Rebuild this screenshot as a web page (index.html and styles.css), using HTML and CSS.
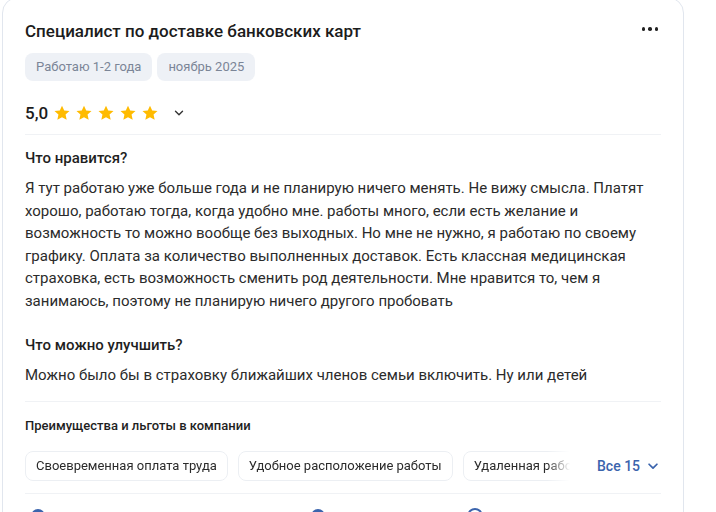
FILE: index.html
```html
<!DOCTYPE html>
<html lang="ru">
<head>
<meta charset="utf-8">
<link rel="stylesheet" href="styles.css">
</head>
<body>
<div class="card">
  <div class="head">
    <h2 class="title">Специалист по доставке банковских карт</h2>
    <span class="more"><i></i><i></i><i></i></span>
  </div>
  <div class="tags">
    <span class="tag">Работаю 1-2 года</span>
    <span class="tag">ноябрь 2025</span>
  </div>
  <div class="rating">
    <span class="score">5,0</span>
    <span class="stars">
      <svg viewBox="0 0 24 24"><path d="M12 2.2l2.95 6.45 7.05.75-5.27 4.75 1.48 6.95L12 17.55 5.79 21.1l1.48-6.95L2 9.4l7.05-.75z"/></svg>
      <svg viewBox="0 0 24 24"><path d="M12 2.2l2.95 6.45 7.05.75-5.27 4.75 1.48 6.95L12 17.55 5.79 21.1l1.48-6.95L2 9.4l7.05-.75z"/></svg>
      <svg viewBox="0 0 24 24"><path d="M12 2.2l2.95 6.45 7.05.75-5.27 4.75 1.48 6.95L12 17.55 5.79 21.1l1.48-6.95L2 9.4l7.05-.75z"/></svg>
      <svg viewBox="0 0 24 24"><path d="M12 2.2l2.95 6.45 7.05.75-5.27 4.75 1.48 6.95L12 17.55 5.79 21.1l1.48-6.95L2 9.4l7.05-.75z"/></svg>
      <svg viewBox="0 0 24 24"><path d="M12 2.2l2.95 6.45 7.05.75-5.27 4.75 1.48 6.95L12 17.55 5.79 21.1l1.48-6.95L2 9.4l7.05-.75z"/></svg>
    </span>
    <svg class="chev" viewBox="0 0 16 16"><path d="M4 6l4 4 4-4" fill="none" stroke="#333" stroke-width="1.6" stroke-linecap="round" stroke-linejoin="round"/></svg>
  </div>
  <hr class="sep">
  <h3 class="sub">Что нравится?</h3>
  <p class="text">Я тут работаю уже больше года и не планирую ничего менять. Не вижу смысла. Платят хорошо, работаю тогда, когда удобно мне. работы много, если есть желание и возможность то можно вообще без выходных. Но мне не нужно, я работаю по своему графику. Оплата за количество выполненных доставок. Есть классная медицинская страховка, есть возможность сменить род деятельности. Мне нравится то, чем я занимаюсь, поэтому не планирую ничего другого пробовать</p>
  <h3 class="sub sub2">Что можно улучшить?</h3>
  <p class="text">Можно было бы в страховку ближайших членов семьи включить. Ну или детей</p>
  <hr class="sep sep2">
  <h4 class="perks-title">Преимущества и льготы в компании</h4>
  <div class="perks">
    <div class="chips">
      <span class="chip">Своевременная оплата труда</span>
      <span class="chip">Удобное расположение работы</span>
      <span class="chip">Удаленная работа</span>
    </div>
    <span class="all">Все 15
      <svg viewBox="0 0 16 16"><path d="M3.5 6l4.5 4.5L12.5 6" fill="none" stroke="#3b64ad" stroke-width="2" stroke-linecap="round" stroke-linejoin="round"/></svg>
    </span>
  </div>
  <hr class="sep sep3">
  <div class="actions">
    <svg class="act a1" viewBox="0 0 16 16"><circle cx="8" cy="8" r="7" fill="#3b64ad"/></svg>
    <svg class="act a2" viewBox="0 0 16 16"><circle cx="8" cy="8" r="7" fill="#3b64ad"/></svg>
    <svg class="act a3" viewBox="0 0 16 16"><circle cx="8" cy="8" r="7" fill="none" stroke="#3b64ad" stroke-width="2"/></svg>
  </div>
</div>
</body>
</html>
```
FILE: styles.css
```css
html, body {
  margin: 0;
  padding: 0;
  background: #fff;
  overflow: hidden;
}
body {
  font-family: Roboto, "Noto Sans", "Liberation Sans", sans-serif;
  color: #1f1f1f;
}
.card {
  margin: -3px 0 0 2px;
  width: 682px;
  box-sizing: border-box;
  border: 1px solid #e1e6ee;
  border-radius: 16px;
  padding: 21px 22px 0 22px;
  background: #fff;
}
.head {
  display: flex;
  align-items: center;
  justify-content: space-between;
}
.title {
  margin: 0;
  font-size: 17px;
  line-height: 24px;
  font-weight: 500;
  color: #1c1c1c;
}
.more {
  display: flex;
  gap: 3px;
  margin: 0 3px 4px 0;
}
.more i {
  width: 3.5px;
  height: 3.5px;
  border-radius: 50%;
  background: #222;
}
.tags {
  display: flex;
  gap: 5px;
  margin-top: 10px;
}
.tag {
  height: 28px;
  line-height: 28px;
  padding: 0 11px;
  border-radius: 8px;
  background: #eef1f6;
  color: #7b8597;
  font-size: 13px;
}
.rating {
  display: flex;
  align-items: center;
  height: 24px;
  margin-top: 20px;
}
.score {
  font-size: 17px;
  font-weight: 500;
  color: #1c1c1c;
  margin-right: 5px;
}
.stars {
  display: flex;
  gap: 4px;
}
.stars svg {
  width: 18px;
  height: 18px;
  fill: #ffbb00;
}
.chev {
  width: 14px;
  height: 14px;
  margin-left: 13px;
}
.sep {
  border: 0;
  border-top: 1px solid #f0f2f5;
  margin: 9px 0 0 0;
}
.sub {
  margin: 13px 0 0 0;
  font-size: 15px;
  line-height: 20px;
  font-weight: 500;
  color: #1f1f1f;
}
.sub2 {
  margin-top: 22px;
}
.text {
  margin: 9px 0 0 0;
  font-size: 15px;
  line-height: 22.6px;
  color: #2b2b2b;
}
.sep2 {
  margin-top: 15px;
}
.perks-title {
  margin: 15px 0 0 0;
  font-size: 13px;
  line-height: 18px;
  font-weight: 500;
  color: #1f1f1f;
}
.perks {
  display: flex;
  align-items: center;
  margin-top: 16px;
}
.chips {
  display: flex;
  gap: 10px;
  width: 545px;
  overflow: hidden;
  -webkit-mask-image: linear-gradient(to right, #000 522px, transparent 545px);
  mask-image: linear-gradient(to right, #000 522px, transparent 545px);
}
.chip {
  flex: none;
  height: 28px;
  line-height: 28px;
  padding: 0 10px;
  border: 1px solid #eceff3;
  border-radius: 8px;
  font-size: 13px;
  color: #2b2b2b;
}
.all {
  display: flex;
  align-items: center;
  gap: 6px;
  margin-left: 27px;
  color: #3b64ad;
  font-size: 14px;
  font-weight: 500;
}
.all svg {
  width: 14px;
  height: 14px;
}
.sep3 {
  margin-top: 12px;
}
.actions {
  display: flex;
  margin-top: 14px;
  height: 20px;
}
.act {
  width: 16px;
  height: 16px;
}
.a1 { margin-left: 5px; }
.a2 { margin-left: 264px; }
.a3 { margin-left: 141px; }
```
